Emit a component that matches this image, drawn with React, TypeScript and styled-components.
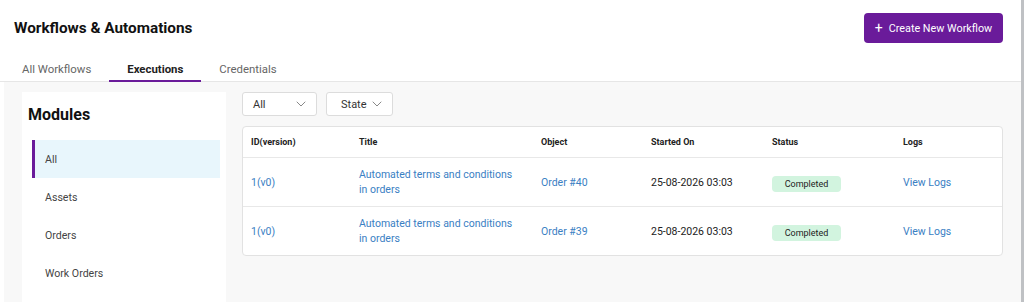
import React from "react";
import styled, { createGlobalStyle } from "styled-components";

const Global = createGlobalStyle`
  html, body { margin: 0; padding: 0; background: #ffffff; }
  body { font-family: Roboto, "Liberation Sans", Arial, sans-serif; color: #222; }
  * { box-sizing: border-box; }
`;

const Shell = styled.div`
  width: 1024px;
  height: 302px;
  display: flex;
  flex-direction: column;
  border-right: 3px solid #bfc1c4;
  overflow: hidden;
`;

const Header = styled.header`
  display: flex;
  justify-content: space-between;
  align-items: center;
  padding: 13px 18px 0 14px;
  height: 43px;
`;

const Title = styled.h1`
  margin: 0;
  font-size: 15.3px;
  font-weight: 700;
  color: #111;
`;

const PrimaryButton = styled.button`
  height: 30px;
  width: 139px;
  border: none;
  border-radius: 4px;
  background: #6a1b9a;
  color: #fff;
  font-family: Roboto, "Liberation Sans", Arial, sans-serif;
  font-size: 10.8px;
  white-space: nowrap;
  display: flex;
  align-items: center;
  justify-content: center;
  gap: 6px;
  padding: 0;
`;

const Plus = styled.span`
  font-size: 14px;
  line-height: 12px;
`;

const Tabs = styled.nav`
  display: flex;
  height: 39px;
  align-items: flex-end;
  padding-left: 4px;
  border-bottom: 1px solid #e6e6e6;
`;

const Tab = styled.div<{ $active?: boolean }>`
  padding: 0 18px 4px;
  font-size: 11.4px;
  font-weight: ${(p) => (p.$active ? 700 : 400)};
  color: ${(p) => (p.$active ? "#222" : "#666")};
  border-bottom: 2px solid ${(p) => (p.$active ? "#6a1b9a" : "transparent")};
  margin-bottom: -1px;
`;

const Body = styled.div`
  flex: 1;
  display: flex;
  gap: 16px;
  background: #f8f8f8;
  margin-left: 4px;
  padding: 10px 18px 0 18px;
`;

const Sidebar = styled.aside`
  width: 204px;
  background: #fff;
  padding: 13px 6px 0 10px;
`;

const SideTitle = styled.h2`
  margin: 0 0 16px -4px;
  font-size: 16px;
  font-weight: 700;
  color: #111;
`;

const SideItem = styled.div<{ $active?: boolean }>`
  height: 38px;
  display: flex;
  align-items: center;
  padding-left: 10px;
  font-size: 10.6px;
  color: #444;
  border-left: 3px solid ${(p) => (p.$active ? "#6a1b9a" : "transparent")};
  background: ${(p) => (p.$active ? "#e8f6fc" : "transparent")};
`;

const Content = styled.section`
  flex: 1;
  display: flex;
  flex-direction: column;
  gap: 10px;
`;

const Filters = styled.div`
  display: flex;
  gap: 9px;
`;

const Select = styled.div<{ $w: number; $pl: number }>`
  width: ${(p) => p.$w}px;
  height: 24px;
  background: #fff;
  border: 1px solid #dcdcdc;
  border-radius: 3px;
  display: flex;
  align-items: center;
  justify-content: space-between;
  padding: 0 10px 0 ${(p) => p.$pl}px;
  font-size: 11px;
  color: #333;
`;

const Card = styled.div`
  background: #fff;
  border: 1px solid #e2e2e2;
  border-radius: 4px;
  overflow: hidden;
`;

const Row = styled.div<{ $head?: boolean }>`
  display: grid;
  grid-template-columns: 108px 182px 110px 121px 131px 1fr;
  align-items: center;
  height: ${(p) => (p.$head ? "30px" : "49px")};
  padding-left: 8px;
  border-top: ${(p) => (p.$head ? "none" : "1px solid #e8e8e8")};
`;

const HeadCell = styled.div`
  font-size: 9px;
  font-weight: 700;
  color: #222;
`;

const Cell = styled.div<{ $link?: boolean }>`
  font-size: 10.5px;
  line-height: 15px;
  color: ${(p) => (p.$link ? "#3a80c3" : "#222")};
`;

const Badge = styled.span`
  display: inline-flex;
  align-items: center;
  justify-content: center;
  width: 69px;
  height: 16px;
  border-radius: 4px;
  background: #d2f4df;
  font-size: 9px;
  color: #222;
`;

const Chevron = () => (
  <svg width="10" height="6" viewBox="0 0 10 6" fill="none">
    <path d="M1 1l4 4 4-4" stroke="#888" strokeWidth="1" strokeLinecap="round" strokeLinejoin="round" />
  </svg>
);

const rows = [
  { id: "1(v0)", object: "Order #40" },
  { id: "1(v0)", object: "Order #39" },
];

export default function App() {
  return (
    <Shell>
      <Global />
      <Header>
        <Title>Workflows &amp; Automations</Title>
        <PrimaryButton>
          <Plus>+</Plus>
          <span>Create New Workflow</span>
        </PrimaryButton>
      </Header>
      <Tabs>
        <Tab>All Workflows</Tab>
        <Tab $active>Executions</Tab>
        <Tab>Credentials</Tab>
      </Tabs>
      <Body>
        <Sidebar>
          <SideTitle>Modules</SideTitle>
          <SideItem $active>All</SideItem>
          <SideItem>Assets</SideItem>
          <SideItem>Orders</SideItem>
          <SideItem>Work Orders</SideItem>
        </Sidebar>
        <Content>
          <Filters>
            <Select $w={75} $pl={10}>
              <span>All</span>
              <Chevron />
            </Select>
            <Select $w={67} $pl={14}>
              <span>State</span>
              <Chevron />
            </Select>
          </Filters>
          <Card>
            <Row $head>
              <HeadCell>ID(version)</HeadCell>
              <HeadCell>Title</HeadCell>
              <HeadCell>Object</HeadCell>
              <HeadCell>Started On</HeadCell>
              <HeadCell>Status</HeadCell>
              <HeadCell>Logs</HeadCell>
            </Row>
            {rows.map((r, i) => (
              <Row key={i}>
                <Cell $link>{r.id}</Cell>
                <Cell $link>
                  Automated terms and conditions
                  <br />
                  in orders
                </Cell>
                <Cell $link>{r.object}</Cell>
                <Cell>25-08-2026 03:03</Cell>
                <div>
                  <Badge>Completed</Badge>
                </div>
                <Cell $link>View Logs</Cell>
              </Row>
            ))}
          </Card>
        </Content>
      </Body>
    </Shell>
  );
}
